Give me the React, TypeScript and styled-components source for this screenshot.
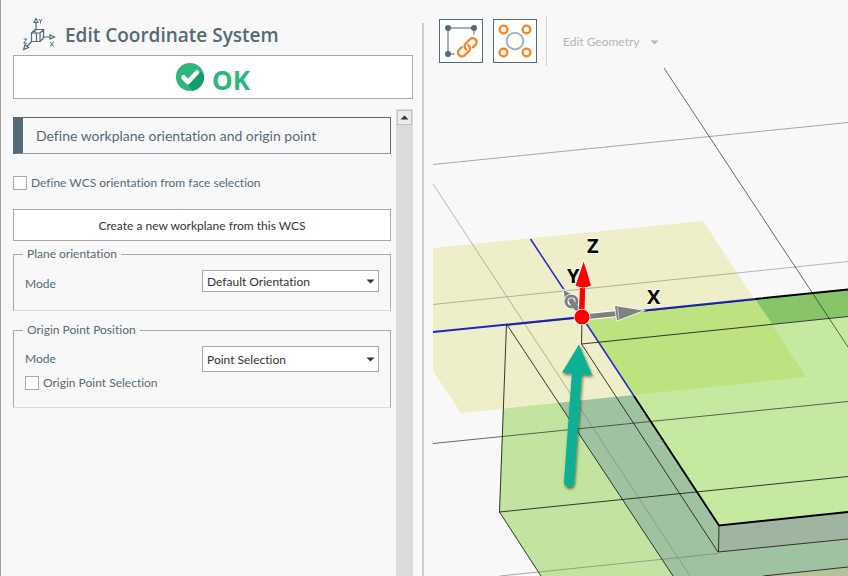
import React from "react";
import styled, { createGlobalStyle } from "styled-components";

const slate = "#546a76";
const line = "#a9a9a9";
const paper = "#f8f8f8";

const GlobalStyle = createGlobalStyle`
  *, *::before, *::after { box-sizing: border-box; }
  body {
    margin: 0;
    background: ${paper};
    color: ${slate};
    font: 12px/16px Lato, "Open Sans", sans-serif;
    font-variant-ligatures: none;
  }
  button, select, input { font: inherit; font-variant-ligatures: none; }
`;

const Shell = styled.div`
  display: grid;
  grid-template-columns: minmax(360px, 1fr) minmax(0, 1fr);
  height: 100vh;
  overflow: hidden;
`;

const Panel = styled.aside`
  display: flex;
  min-height: 0;
  border-left: 1px solid #a0a0a0;
`;

const PanelBody = styled.div`
  flex: 1;
  display: flex;
  flex-direction: column;
  min-width: 0;
  padding: 17px 9px 0 12px;
`;

const Splitter = styled.div`
  width: 2px;
  margin-top: 23px;
  background: #cfcfcf;
`;

const PanelHeader = styled.header`
  display: flex;
  align-items: center;
  gap: 9px;
  height: 34px;
  padding-left: 9px;
  margin-bottom: 4px;
`;

const Title = styled.h1`
  margin: 0;
  padding-top: 2px;
  font-family: "Open Sans", "Noto Sans", sans-serif;
  font-size: 19px;
  line-height: 28px;
  font-weight: 600;
  white-space: nowrap;
`;

const OkButton = styled.button`
  display: flex;
  align-items: center;
  justify-content: center;
  gap: 8px;
  height: 44px;
  flex: none;
  padding: 0;
  border: 1px solid ${line};
  background: #fff;
  color: #2fb67c;
  font-family: "Open Sans", "Noto Sans", sans-serif;
  font-size: 26px;
  line-height: 36px;
  font-weight: 700;

  span { padding-top: 6px; }
`;

const ScrollRow = styled.div`
  flex: 1;
  display: flex;
  gap: 5px;
  min-height: 0;
  margin-top: 10px;
`;

const Form = styled.form`
  flex: 1;
  min-width: 0;
  padding-top: 8px;
`;

const ScrollTrack = styled.div`
  width: 17px;
  padding: 1px;
  background: #dbdbdb;
`;

const ScrollUp = styled.button`
  display: flex;
  align-items: center;
  justify-content: center;
  width: 15px;
  height: 15px;
  padding: 0;
  border: 1px solid #c2c2c2;
  background: #ececec;
`;

const SectionTitle = styled.h2`
  margin: 0 0 21px;
  padding: 0 13px;
  border: 1px solid ${slate};
  border-left-width: 10px;
  border-bottom-color: #8d9ba3;
  font-size: 14px;
  line-height: 35px;
  font-weight: 400;
  white-space: nowrap;
`;

const CheckLabel = styled.label`
  display: flex;
  align-items: center;
  gap: 4px;
  height: 16px;
  line-height: 18px;
  white-space: nowrap;
`;

const CheckBox = styled.input`
  appearance: none;
  width: 14px;
  height: 14px;
  margin: 0;
  border: 1px solid ${line};
  background: #fff;

  &:checked { background: ${slate}; }
`;

const WideButton = styled.button`
  display: block;
  width: 100%;
  height: 32px;
  margin: 18px 0 5px;
  padding: 2px 0 0;
  border: 1px solid ${line};
  background: #fff;
  color: #333;
`;

const Group = styled.fieldset<{ $height: number }>`
  min-width: 0;
  min-height: ${(p) => p.$height}px;
  margin: 0 0 11px;
  padding: 8px 11px 0;
  border: 1px solid ${line};
  border-bottom-color: #dcdcdc;
`;

const Legend = styled.legend`
  padding: 0 4px;
  margin-left: -2px;
  line-height: 16px;
`;

const Field = styled.div<{ $align: "center" | "end" }>`
  display: grid;
  grid-template-columns: minmax(0, 1fr) minmax(0, 1fr);
  align-items: ${(p) => p.$align};
  margin-bottom: 3px;
`;

const SelectWrap = styled.div`
  display: grid;
  align-items: center;

  > * { grid-area: 1 / 1; }
  > svg { justify-self: end; margin-right: 4px; pointer-events: none; }
`;

const Select = styled.select<{ $height: number }>`
  appearance: none;
  width: 100%;
  height: ${(p) => p.$height}px;
  padding: 2px 18px 0 4px;
  border: 1px solid ${line};
  border-radius: 0;
  background: #fff;
  color: #333;
`;

const Workspace = styled.main`
  display: flex;
  flex-direction: column;
  min-width: 0;
  min-height: 0;
  padding-left: 9px;
`;

const Toolbar = styled.div`
  display: flex;
  align-items: center;
  gap: 10px;
  height: 66px;
  flex: none;
  padding: 16px 0 0 6px;
`;

const ToolButton = styled.button`
  display: flex;
  width: 44px;
  height: 44px;
  padding: 0;
  border: 1px solid ${slate};
  background: #fff;
`;

const Divider = styled.div`
  width: 1px;
  height: 50px;
  margin-left: -1px;
  background: #cfcfcf;
`;

const MenuButton = styled.button`
  display: flex;
  align-items: center;
  gap: 10px;
  margin-left: 6px;
  padding: 2px 0 0;
  border: 0;
  background: none;
  color: #b5b5b5;
  white-space: nowrap;
`;

const Canvas = styled.svg`
  display: block;
  flex: 1;
  width: 100%;
  min-height: 0;
`;

const Caret = ({ color = "#333", up = false }: { color?: string; up?: boolean }) => (
  <svg width="9" height="5" viewBox="0 0 9 5" aria-hidden="true">
    <path d={up ? "M0.5 4.5 4.5 0.5 8.5 4.5Z" : "M0.5 0.5 4.5 4.5 8.5 0.5Z"} fill={color} />
  </svg>
);

const AxesIcon = () => (
  <svg width="34" height="34" viewBox="22 17 34 34" fill="none" stroke={slate} strokeWidth="1.2" aria-hidden="true">
    <path d="M36 29V23M34 22.5 36 18.5 38 22.5ZM44 37H50M50 35 54.5 37 50 39ZM31.5 41.5 27 46.5M25 44.8 28.5 47.6 23.6 49.4Z" />
    <path d="M31.5 33H40V41.5H31.5ZM31.5 33 35 29.5H43.5L40 33M43.5 29.5V38L40 41.5M35 30V33M36.5 33V41" />
    <path d="M39 19 40.5 21 42 19M40.5 21V23.5M50 42 53.5 46.5M53.5 42 50 46.5M23.7 39H26.7L23.7 43.2H27" strokeWidth="1" />
  </svg>
);

const CheckIcon = () => (
  <svg width="28" height="28" viewBox="0 0 28 28" aria-hidden="true">
    <circle cx="14" cy="14" r="14" fill="#2fb67c" />
    <path d="M12 22 24 8 28 12A14 14 0 0 1 16.5 27.8Z" fill="#0a9f6b" />
    <path d="M7.5 14.5 12 19 21 9.5" fill="none" stroke="#fff" strokeWidth="4.6" strokeLinecap="round" strokeLinejoin="round" />
  </svg>
);

const LinkPointsIcon = () => (
  <svg width="42" height="42" viewBox="440 20 42 42" fill="none" aria-hidden="true">
    <path d="M474 34.5V28H448V54H454.5" stroke="#9fb0ba" strokeWidth="2" />
    <g fill={slate}>
      <circle cx="448" cy="28" r="3" />
      <circle cx="474" cy="28" r="3" />
      <circle cx="448" cy="54" r="3" />
    </g>
    <g transform="translate(467.3 47.3) rotate(-44)" stroke="#ff7f1a" strokeWidth="2.3" strokeLinecap="round">
      <path d="M-4 -3.9H-7.5A3.9 3.9 0 0 0 -7.5 3.9H-1.5A3.9 3.9 0 0 0 2.2 -0.8" />
      <path d="M4 3.9H7.5A3.9 3.9 0 0 0 7.5 -3.9H1.5A3.9 3.9 0 0 0 -2.2 0.8" />
    </g>
  </svg>
);

const CirclePatternIcon = () => (
  <svg width="42" height="42" viewBox="494 20 42 42" fill="none" aria-hidden="true">
    <circle cx="515" cy="41" r="8.3" stroke="#a3b3bd" strokeWidth="2" />
    <g stroke="#ff7f1a" strokeWidth="2.2">
      <circle cx="503.5" cy="29.5" r="3.9" />
      <circle cx="526.5" cy="29.5" r="3.9" />
      <circle cx="503.5" cy="52.5" r="3.9" />
      <circle cx="526.5" cy="52.5" r="3.9" />
    </g>
  </svg>
);

const Scene = () => (
  <Canvas viewBox="433 66 415 510" preserveAspectRatio="xMinYMin slice" role="img" aria-label="3D workplane view">
    <defs>
      <filter id="arrowShadow" x="-50%" y="-20%" width="200%" height="140%">
        <feDropShadow dx="1" dy="2" stdDeviation="1.8" floodOpacity="0.55" />
      </filter>
    </defs>

    <polygon points="506,324 499,512 541,576 848,576 848,316 582,317" fill="#c3e4a0" />
    <polygon points="506,324 673,576 848,576 848,500 719,525 582,317" fill="#9fc3a0" />
    <polygon points="763,576 848,567 848,576" fill="#b3c39b" />
    <polygon points="719,525 848,512 848,539 718,552" fill="#a0b5a1" />
    <polygon points="433,248 703,221 806,377 461,413 433,371" fill="#eeeec8" />
    <polygon points="582,317 848,289 848,512 719,525" fill="#c5e9a0" />
    <polygon points="755,299 848,289 848,316 772,324" fill="#88c468" />
    <polygon points="582,317 755,299 806,377 634,395" fill="#bee27f" />

    <g stroke="#777" strokeWidth="0.8" fill="none">
      <path d="M433 164.5 848 122.5M500 576 718 553.5" strokeOpacity="0.8" />
      <path d="M433 304.5 848 261.5M433 184 690 576" strokeOpacity="0.65" />
      <path d="M664 68 755 206" stroke="#444" />
    </g>
    <g stroke="#222" strokeWidth="0.9" fill="none">
      <path d="M755 206 848 347" strokeOpacity="0.75" />
      <path d="M433 443.5 848 401.5" strokeOpacity="0.75" />
      <path d="M506.5 324 499.5 512 541 576M499.5 512 848 476.5" />
      <path d="M506.5 324 673 576M582 318 581.5 344 718 552 848 539M581.5 344 848 316.5" />
      <path d="M763 576 848 567M719 525 718.5 552" />
    </g>
    <path d="M634 396 719 525.5 848 512M755 299 848 289.5" fill="none" stroke="#000" strokeWidth="1.9" />
    <path d="M433 332 582 317 755 299" fill="none" stroke="#2424c4" strokeWidth="2" />
    <path d="M530.5 239 582 317 634 396" fill="none" stroke="#2828c8" strokeWidth="1.5" />
    <path d="M506 325.5 575 318.5M645 311 755 299.7" fill="none" stroke="#111b66" strokeWidth="0.7" />

    <g filter="url(#arrowShadow)" fill="#08b092">
      <path d="M577 372 569 482" stroke="#08b092" strokeWidth="10" strokeLinecap="round" />
      <polygon points="579,344.5 592,375 562,372.5" />
    </g>

    <g stroke="#fff" strokeWidth="1.2" paintOrder="stroke" fill="#000" fontFamily="'Open Sans', 'Noto Sans', sans-serif" fontSize="20" fontWeight="700">
      <text x="587" y="253">Z</text>
      <text x="567" y="283">Y</text>
      <text x="647" y="304">X</text>
    </g>

    <g stroke="#fff" strokeWidth="1.5" paintOrder="stroke" fill="#808080">
      <polygon points="563.5,290 575,296 565.5,303" />
      <path d="M570 299 580 312" stroke="#fff" strokeWidth="7" />
      <path d="M570 299 580 312" stroke="#808080" strokeWidth="5" />
      <circle cx="571.5" cy="301.5" r="5.5" fill="none" stroke="#fff" strokeWidth="4.5" />
      <circle cx="571.5" cy="301.5" r="5.5" fill="none" stroke="#808080" strokeWidth="3" />
      <path d="M571 301 577 309" stroke="#808080" strokeWidth="5" />
      <path d="M588 316.5 618 313.5" stroke="#fff" strokeWidth="7" />
      <path d="M588 316.5 618 313.5" stroke="#808080" strokeWidth="5" />
      <polygon points="615,306 643,310.5 617,320.5" />
      <path d="M617.5 307.5 619 319.5" stroke="#d5d5d5" strokeWidth="0.8" />
    </g>
    <g stroke="#fff" strokeWidth="1.5" paintOrder="stroke" fill="#f00">
      <polygon points="579.8,288 585.2,288 584.5,312 579,312" />
      <circle cx="582" cy="317" r="7.6" />
      <path d="M583.7 261.5 591 285.5Q583 289.5 575.5 285.5Z" />
    </g>
  </Canvas>
);

export default function App() {
  return (
    <>
      <GlobalStyle />
      <Shell>
        <Panel>
          <PanelBody>
            <PanelHeader>
              <AxesIcon />
              <Title>Edit Coordinate System</Title>
            </PanelHeader>
            <OkButton type="button">
              <CheckIcon />
              <span>OK</span>
            </OkButton>
            <ScrollRow>
              <Form>
                <SectionTitle>Define workplane orientation and origin point</SectionTitle>
                <CheckLabel>
                  <CheckBox type="checkbox" />
                  Define WCS orientation from face selection
                </CheckLabel>
                <WideButton type="button">Create a new workplane from this WCS</WideButton>
                <Group $height={65}>
                  <Legend>Plane orientation</Legend>
                  <Field $align="end">
                    <label htmlFor="plane-mode">Mode</label>
                    <SelectWrap>
                      <Select id="plane-mode" $height={22}>
                        <option>Default Orientation</option>
                      </Select>
                      <Caret />
                    </SelectWrap>
                  </Field>
                </Group>
                <Group $height={86}>
                  <Legend>Origin Point Position</Legend>
                  <Field $align="center">
                    <label htmlFor="origin-mode">Mode</label>
                    <SelectWrap>
                      <Select id="origin-mode" $height={26}>
                        <option>Point Selection</option>
                      </Select>
                      <Caret />
                    </SelectWrap>
                  </Field>
                  <CheckLabel>
                    <CheckBox type="checkbox" />
                    Origin Point Selection
                  </CheckLabel>
                </Group>
              </Form>
              <ScrollTrack>
                <ScrollUp type="button" aria-label="Scroll up">
                  <Caret up />
                </ScrollUp>
              </ScrollTrack>
            </ScrollRow>
          </PanelBody>
          <Splitter />
        </Panel>
        <Workspace>
          <Toolbar>
            <ToolButton type="button" aria-label="Link points">
              <LinkPointsIcon />
            </ToolButton>
            <ToolButton type="button" aria-label="Circle pattern">
              <CirclePatternIcon />
            </ToolButton>
            <Divider />
            <MenuButton type="button" disabled>
              Edit Geometry
              <Caret color="#b5b5b5" />
            </MenuButton>
          </Toolbar>
          <Scene />
        </Workspace>
      </Shell>
    </>
  );
}
